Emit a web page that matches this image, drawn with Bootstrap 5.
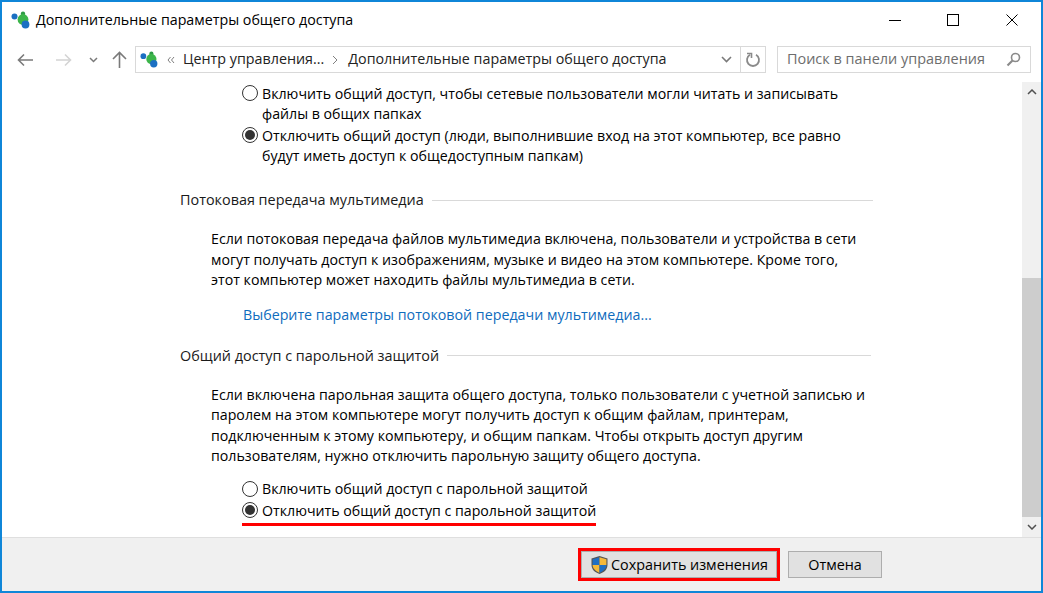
<!DOCTYPE html>
<html lang="ru"><head><meta charset="utf-8"><title>Дополнительные параметры общего доступа</title>
<link rel="stylesheet" href="https://cdn.jsdelivr.net/npm/bootstrap@5.3.0/dist/css/bootstrap.min.css">
<style>
html,body{height:100%;margin:0;overflow:hidden}
body{font-family:"Open Sans","Noto Sans",sans-serif;font-size:14.2px;color:#000;background:#fff}
.win{width:1043px;height:593px;border:2px solid #0f86d8;display:flex;flex-direction:column;background:#fff}
.titlebar{height:36px;display:flex;align-items:center;padding-left:9px;gap:5px;font-size:14.25px;flex:none}
.wbtns{margin-left:auto;display:flex;height:36px}
.wbtn{width:58.5px;display:flex;align-items:center;justify-content:center}
.toolbar{height:27px;margin-top:8px;display:flex;align-items:stretch;flex:none;padding-left:15px}
.navarea{width:118px;display:flex;align-items:center;flex:none}
.fwd{margin-left:23px}
.chev{margin-left:17px}
.upb{margin-left:14px}
.addr{width:631px;border:1px solid #d9d9d9;display:flex;align-items:center;font-size:14.3px;color:#222;flex:none}
.addr .seg{white-space:nowrap;padding-bottom:1px}
.addr .seg2{margin-left:10px;font-size:14.3px}
.rfr{width:25px;height:100%;border-left:1px solid #d9d9d9;flex:none}
.srch{margin-left:11px;width:254px;border:1px solid #d9d9d9;display:flex;align-items:center;padding:0 9px;color:#6d6d6d;font-size:14.45px;white-space:nowrap;flex:none}
.srch span{padding-bottom:1px}
.mainarea{flex:1;display:flex;min-height:0;margin-top:9px}
.cont{flex:1;padding:0 0 0 178px;min-width:0;overflow:hidden}
.ln{line-height:20.5px;white-space:nowrap;display:block}
.rad{display:flex;align-items:center;gap:4px;margin-left:62px;height:20.5px;white-space:nowrap}
.circ{width:16px;height:16px;border-radius:50%;border:1.2px solid #333;flex:none;display:flex;align-items:center;justify-content:center;background:#fff}
.circ.on::after{content:"";width:10px;height:10px;border-radius:50%;background:#333}
.txt2{margin-left:82px}
.txt3{margin-left:31px}
.head{display:flex;align-items:center;gap:8px;line-height:20px;white-space:nowrap;color:#1a1a1a;font-size:14.4px}
.head i{flex:1;height:1px;background:#d9d9d9;display:block}
.h1w{width:693px}
.h2w{width:691px}
.lnk{color:#0f6cbd;margin-left:63px;display:block;line-height:20px;text-decoration:none;font-size:14.25px}
.undl{border-bottom:3px solid #f00;width:354px;margin-left:62px;margin-top:1px;height:26px}
.undl .rad{margin-left:0}
.sbar{width:19px;background:#f0f0f0;flex:none;display:flex;flex-direction:column}
.sarrow{height:20px;display:flex;align-items:center;justify-content:center;flex:none}
.strack{flex:1;display:flex;flex-direction:column;justify-content:flex-end}
.sthumb{height:239px;background:#cdcdcd}
.foot{height:54px;background:#f0f0f0;border-top:1px solid #dfdfdf;flex:none;display:flex;align-items:center;padding-left:576px}
.outline{border:3px solid #f00;width:202px;height:33px;display:flex}
.wbut{background:#e1e1e1;border:1px solid #adadad;border-radius:0;padding:1px 0 0;font-size:14.35px;color:#000;display:flex;align-items:center;justify-content:center;white-space:nowrap;line-height:1}
.save{flex:1;gap:2px}
.cancel{width:94px;height:27px;margin-left:8px}
.first{margin-top:1px}.gapa{margin-top:1px}.mtb{margin-top:24px}.mtc{margin-top:19px}.mtd{margin-top:14px}.mte{margin-top:21px}.mtf{margin-top:19px}.mtg{margin-top:12px}
</style></head><body>
<div class="win">
 <div class="titlebar">
  <svg width="20" height="18" viewBox="0 0 20 18"><circle cx="3.5" cy="5.5" r="3" fill="#1b6fc2"/><circle cx="12" cy="2.8" r="2.2" fill="#2e9b46"/><circle cx="12" cy="8.5" r="5.4" fill="#3cb54a"/><circle cx="14.5" cy="13.5" r="3.9" fill="#1b6fc2"/></svg>
  <span>Дополнительные параметры общего доступа</span>
  <div class="wbtns">
   <div class="wbtn"><svg width="14" height="14"><path d="M1 7.5h12" stroke="#000"/></svg></div>
   <div class="wbtn"><svg width="14" height="14"><rect x="1.5" y="1.5" width="11" height="11" fill="none" stroke="#000"/></svg></div>
   <div class="wbtn"><svg width="14" height="14"><path d="M1.5 1.5l11 11M12.5 1.5l-11 11" stroke="#000"/></svg></div>
  </div>
 </div>
 <div class="toolbar">
  <div class="navarea">
   <svg width="16" height="14" viewBox="0 0 16 14"><path d="M16 7H1.5M7 1.5L1.5 7 7 12.5" fill="none" stroke="#7a7a7a" stroke-width="1.6"/></svg>
   <svg class="fwd" width="16" height="14" viewBox="0 0 16 14"><path d="M0 7h14.5M9 1.5L14.5 7 9 12.5" fill="none" stroke="#d4d4d4" stroke-width="1.6"/></svg>
   <svg class="chev" width="9" height="6" viewBox="0 0 9 6"><path d="M1 1l3.5 3.5L8 1" fill="none" stroke="#7a7a7a" stroke-width="1.5"/></svg>
   <svg class="upb" width="15" height="17" viewBox="0 0 15 17"><path d="M7.5 17V1.5M1 8L7.5 1.5 14 8" fill="none" stroke="#7a7a7a" stroke-width="1.6"/></svg>
  </div>
  <div class="addr">
   <svg class="ms-1" width="19" height="17" viewBox="0 0 20 18"><circle cx="3.5" cy="5.5" r="3" fill="#1b6fc2"/><circle cx="12" cy="2.8" r="2.2" fill="#2e9b46"/><circle cx="12" cy="8.5" r="5.4" fill="#3cb54a"/><circle cx="14.5" cy="13.5" r="3.9" fill="#1b6fc2"/></svg>
   <svg class="ms-2" width="8" height="8" viewBox="0 0 8 8"><path d="M3.5 1L1 4l2.5 3M7 1L4.5 4 7 7" fill="none" stroke="#808080"/></svg>
   <span class="seg ms-2">Центр управления...</span>
   <svg class="ms-2" width="6" height="10" viewBox="0 0 6 10"><path d="M1 1l4 4-4 4" fill="none" stroke="#808080"/></svg>
   <span class="seg seg2">Дополнительные параметры общего доступа</span>
   <svg class="ms-auto me-2" width="11" height="7" viewBox="0 0 11 7"><path d="M1 1l4.5 4.5L10 1" fill="none" stroke="#7a7a7a" stroke-width="1.6"/></svg>
   <div class="rfr d-flex align-items-center justify-content-center">
    <svg width="16" height="16" viewBox="0 0 16 16"><path d="M5 2.8A6 6 0 1 0 11 2.8" fill="none" stroke="#8a8a8a" stroke-width="1.8"/><path d="M2 1.5h4.5V6" fill="none" stroke="#8a8a8a" stroke-width="1.6"/></svg>
   </div>
  </div>
  <div class="srch"><span>Поиск в панели управления</span>
   <svg class="ms-auto" width="15" height="15" viewBox="0 0 15 15"><circle cx="9.5" cy="5.5" r="4" fill="none" stroke="#8a8a8a" stroke-width="1.6"/><path d="M6.5 8.5L1.5 13.5" stroke="#8a8a8a" stroke-width="2.2"/></svg>
  </div>
 </div>
 <div class="mainarea">
  <div class="cont">
   <div class="rad first"><span class="circ"></span><span>Включить общий доступ, чтобы сетевые пользователи могли читать и записывать</span></div>
   <span class="ln txt2">файлы в общих папках</span>
   <div class="rad gapa"><span class="circ on"></span><span>Отключить общий доступ (люди, выполнившие вход на этот компьютер, все равно</span></div>
   <span class="ln txt2">будут иметь доступ к общедоступным папкам)</span>
   <div class="head h1w mtb"><span>Потоковая передача мультимедиа</span><i></i></div>
   <div class="mtc">
   <span class="ln txt3">Если потоковая передача файлов мультимедиа включена, пользователи и устройства в сети</span>
   <span class="ln txt3">могут получать доступ к изображениям, музыке и видео на этом компьютере. Кроме того,</span>
   <span class="ln txt3">этот компьютер может находить файлы мультимедиа в сети.</span>
   </div>
   <a class="lnk mtd" href="#">Выберите параметры потоковой передачи мультимедиа...</a>
   <div class="head h2w mte"><span>Общий доступ с парольной защитой</span><i></i></div>
   <div class="mtf">
   <span class="ln txt3">Если включена парольная защита общего доступа, только пользователи с учетной записью и</span>
   <span class="ln txt3">паролем на этом компьютере могут получить доступ к общим файлам, принтерам,</span>
   <span class="ln txt3">подключенным к этому компьютеру, и общим папкам. Чтобы открыть доступ другим</span>
   <span class="ln txt3">пользователям, нужно отключить парольную защиту общего доступа.</span>
   </div>
   <div class="rad mtg"><span class="circ"></span><span>Включить общий доступ с парольной защитой</span></div>
   <div class="undl"><div class="rad"><span class="circ on"></span><span>Отключить общий доступ с парольной защитой</span></div></div>
  </div>
  <div class="sbar">
   <div class="sarrow"><svg width="10" height="6" viewBox="0 0 10 6"><path d="M1 5l4-4 4 4" fill="none" stroke="#505050" stroke-width="1.5"/></svg></div>
   <div class="strack"><div class="sthumb"></div></div>
   <div class="sarrow"><svg width="10" height="6" viewBox="0 0 10 6"><path d="M1 1l4 4 4-4" fill="none" stroke="#505050" stroke-width="1.5"/></svg></div>
  </div>
 </div>
 <div class="foot">
  <div class="outline"><button type="button" class="wbut save">
   <svg width="19" height="20" viewBox="0 0 19 20"><path d="M9.5 1L17.5 3.5V10c0 4.5-3.5 7.5-8 9-4.5-1.5-8-4.5-8-9V3.5z" fill="#555"/><path d="M9.5 2.3V10H2.6V4.3z" fill="#1f6fc4"/><path d="M9.5 2.3L16.4 4.3V10H9.5z" fill="#f5b93a"/><path d="M2.6 10H9.5V17.7C6 16.4 2.8 14 2.6 10z" fill="#f5b93a"/><path d="M9.5 10H16.4C16.2 14 13 16.4 9.5 17.7z" fill="#1f6fc4"/></svg>
   <span>Сохранить изменения</span></button></div>
  <button type="button" class="wbut cancel">Отмена</button>
 </div>
</div>
</body></html>
